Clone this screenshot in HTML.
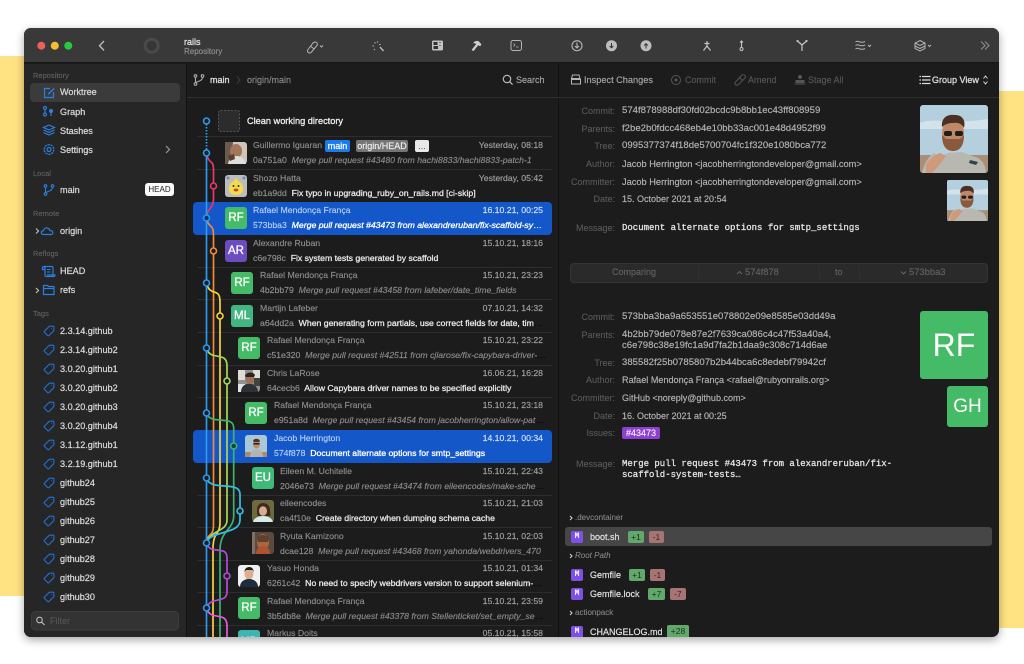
<!DOCTYPE html>
<html><head><meta charset="utf-8"><style>
*{box-sizing:border-box}
html,body{margin:0;padding:0;width:1024px;height:664px;overflow:hidden;background:#fff;font-family:"Liberation Sans",sans-serif}
body{filter:blur(.25px)}
#win{position:absolute;left:24px;top:28px;width:975px;height:609px;border-radius:7px;overflow:hidden;background:#1c1c1c;box-shadow:0 3px 9px rgba(0,0,0,.35)}
.t{position:absolute;white-space:nowrap;line-height:12px;font-size:9px;-webkit-text-stroke:.15px}
.s{position:absolute;left:33px;font-size:7.5px;line-height:10px;color:#5f5f5f;-webkit-text-stroke:.15px}
.i{position:absolute;left:60px;font-size:9.1px;line-height:12px;color:#d6d6d6;-webkit-text-stroke:.25px;white-space:nowrap}
.n{color:#8c8c8c}.d{color:#a0a0a0;position:absolute;right:481px;text-align:right;white-space:nowrap;font-size:8.7px;line-height:12px;-webkit-text-stroke:.15px}
.h{color:#8f8f8f}.b{color:#e8e8e8;-webkit-text-stroke:.28px}.m{color:#8a8a8a;font-style:italic}
.row{position:absolute;font-size:8.7px;line-height:12px;white-space:nowrap;overflow:hidden;text-overflow:ellipsis;width:293px;-webkit-text-stroke:.15px}
.sep{position:absolute;left:197px;width:355px;height:1px;background:#2d2d2d}
.sel{position:absolute;left:193px;width:359px;height:33px;background:#1357c9;border-radius:4px}
.av{position:absolute;width:22px;height:22px;border-radius:3px;color:#fff;font-size:11.5px;line-height:22px;text-align:center;-webkit-text-stroke:.3px;overflow:hidden}
.g{background:#46bb67}.l{position:absolute;right:409px;font-size:9px;line-height:12px;color:#5a5a5a;-webkit-text-stroke:.1px;text-align:right;white-space:nowrap}
.v{position:absolute;left:622px;font-size:9px;line-height:12px;color:#b4b4b4;white-space:nowrap;-webkit-text-stroke:.15px}
.x{font-size:9.6px}.y{font-size:9.25px}
.mono{font-family:"Liberation Mono",monospace;font-size:9px;color:#e2e2e2;-webkit-text-stroke:.3px}
.f{position:absolute;left:590px;font-size:9px;line-height:12px;color:#e0e0e0;-webkit-text-stroke:.2px;white-space:nowrap}
.mk{position:absolute;left:571px;width:12px;height:12px;border-radius:2px;background:#7d50e8;color:#fff;font:bold 8px/12px "Liberation Mono",monospace;text-align:center}
.p,.q{position:absolute;height:12px;border-radius:2px;font-size:8.5px;line-height:12px;text-align:center}
.p{background:#61a86a;color:#17301c}.q{background:#a77474;color:#3d2323}
.sec{position:absolute;left:575px;font-size:8px;line-height:10px;color:#858585;-webkit-text-stroke:.1px;white-space:nowrap}
svg{position:absolute;overflow:visible}
</style></head><body>
<div style="position:absolute;left:0;top:56px;width:30px;height:540px;background:#ffe383"></div>
<div style="position:absolute;left:990px;top:91px;width:34px;height:537px;background:#ffe383"></div>
<div id="win"></div>
<div style="position:absolute;left:24px;top:28px;width:975px;height:609px;border-radius:7px;overflow:hidden">
<div style="position:absolute;left:0;top:0;width:975px;height:35px;background:#393939;border-bottom:1px solid #151515"></div>
<div style="position:absolute;left:0;top:36px;width:163px;height:573px;background:#262626;border-right:1px solid #111"></div>
<div style="position:absolute;left:534px;top:36px;width:1px;height:573px;background:#111"></div>
</div>

<svg width="1024" height="664" style="left:0;top:0" fill="none">
<defs>
<symbol id="tag" viewBox="0 0 12 12" overflow="visible"><path d="M7 1.200h3c.5 0 .9.4.9.9v3c0 .4-.2.6-.4.9L6 10.500c-.4.4-1 .4-1.400 0L1.500 7.400c-.4-.4-.4-1 0-1.400L6 1.600c.3-.2.6-.4 1-.4z" stroke="#1f71d6" stroke-width="1.100" fill="none"/><circle cx="8.600" cy="3.400" r=".5" fill="#1f71d6"/></symbol>
<symbol id="br" viewBox="0 0 12 12" overflow="visible"><g stroke-width="1.100" fill="none"><circle cx="2.500" cy="2" r="1.300"/><circle cx="9.500" cy="2" r="1.300"/><circle cx="2.500" cy="10" r="1.300"/><path d="M2.500 3.300v5.400M9.500 3.300c0 3-3 3.500-5 4.500-1 .5-2 .7-2 1"/></g></symbol>
</defs>
<circle cx="41.300" cy="45.700" r="4" fill="#ee5f57"/><circle cx="54.800" cy="45.700" r="4" fill="#f5bd2f"/><circle cx="68.300" cy="45.700" r="4" fill="#29c840"/>
<path d="M104 41l-4.500 4.700 4.500 4.700" stroke="#bdbdbd" stroke-width="1.400"/>
<circle cx="151.700" cy="45.700" r="6.500" stroke="#4a4a4a" stroke-width="3" fill="#363636"/>
<g stroke="#b5b5b5" stroke-width="1" fill="none">
<path d="M308 49.500l5-6.500c1.500-1.800 3.500-.8 4 0s.5 2-.5 3l-5 6c-1.500 1.500-3 1-3.500.3s-1-1.500 0-2.800zM310.500 46l3.500 3"/>
<path d="M320 45.500l1.500 1.500 1.500-1.500"/>
<path d="M380 47l3.500 4" stroke-width="1.500"/><path d="M375 42v1.500M372.500 46h1.500M378 41.500l-1 1M374 50l1-1M379 44.500h1.500"/>
<rect x="432" y="40.500" width="11" height="10" rx="1.500" fill="#c2c2c2" stroke="none"/><rect x="433.500" y="42" width="4" height="3" fill="#333" stroke="none"/><rect x="433.500" y="46" width="4.500" height="3" fill="#333" stroke="none"/><path d="M440 42v1M440 45v1" stroke="#333"/>
<path d="M472.500 50.500l4.500-5.500" stroke="#cfcfcf" stroke-width="2.200"/><path d="M473.500 42.500c2-2 4-2 5.500-1l2.500 3-1.500 1.800-1.800-1-1.500.8-1-2.300c-.5-.6-1.300-.7-2.200-.3z" fill="#cfcfcf" stroke="none"/>
<rect x="511" y="40.500" width="10.500" height="10" rx="2"/><path d="M513.500 43.500l1.500 1.500-1.500 1.500M516 47h2.500" stroke-width=".8"/>
<circle cx="577" cy="45.700" r="5" stroke-width="1.100"/><path d="M577 42.500v5.500M575 46l2 2 2-2" stroke-width="1.100"/>
<circle cx="611.500" cy="45.700" r="5.500" fill="#bdbdbd" stroke="none"/><path d="M611.500 43v4.500M609.700 46l1.800 1.800 1.800-1.800" stroke="#333"/>
<circle cx="646" cy="45.700" r="5.500" fill="#bdbdbd" stroke="none"/><path d="M646 48.500V44M644.200 45.500l1.800-1.800 1.800 1.800" stroke="#333"/>
<path d="M707 41v5M707 46l-3.500 4.500M707 46l3.500 4.500M704.500 43.500h5" stroke="#c5c5c5" stroke-width="1.200"/>
<path d="M741.500 40.500v7M740 42.500l1.500-1.500 1.500 1.500" stroke="#c5c5c5" stroke-width="1.100"/><circle cx="741.500" cy="49" r="1.500" stroke="#c5c5c5"/>
<path d="M802 51v-6M802 45l-4-3.500M802 45l4-3.500" stroke="#c5c5c5" stroke-width="1.200"/><circle cx="797.500" cy="41" r="1.100" fill="#c5c5c5" stroke="none"/><circle cx="806.500" cy="41" r="1.100" fill="#c5c5c5" stroke="none"/>
<path d="M855.500 42c2-1.500 3-.5 4.500 0s3 .5 5-.5M855.500 45.500c2-1.500 3-.5 4.500 0s3 .5 5-.5M855.500 49c2-1.500 3-.5 4.500 0s3 .5 5-.5"/><path d="M868 45l1.500 1.500 1.500-1.500"/>
<path d="M920 40.500l5 2.500v5.500l-5 2.500-5-2.500V43zM915 43l5 2.500 5-2.500M915 46l5 2.500 5-2.500"/><path d="M928 45l1.500 1.500 1.500-1.500"/>
<path d="M981 41.500l4 4-4 4M985 41.500l4 4-4 4" stroke="#8f8f8f" stroke-width="1.100"/>
</g>
<rect x="30" y="83" width="150" height="19" rx="4" fill="#3b3b3b"/>
<g stroke="#2b7fe0" stroke-width="1.200" fill="none">
<path d="M50 88.500h-5.500v9h9V92"/><path d="M48 93.500l5.500-5.500 1 1-5.500 5.500h-1z" fill="#2b7fe0" stroke="none"/>
<circle cx="45" cy="108" r="1.500"/><path d="M45 109.500v3"/><circle cx="45" cy="114.500" r="1.500"/><circle cx="51" cy="111" r="1.500" fill="#2b7fe0"/><path d="M51 112v4"/>
<path d="M49 125l5.500 2.500-5.500 2.500-5.500-2.500zM43.500 130l5.500 2.500 5.500-2.500M43.500 132.500l5.500 2.500 5.500-2.500"/>
<circle cx="49" cy="149.500" r="2"/><circle cx="49" cy="149.500" r="4.800" stroke-dasharray="2.200 .8" stroke-width="1.300"/>
<path d="M166 146l3.500 3.500-3.500 3.500" stroke="#999"/>
<path d="M36 228.500l2.500 2.500-2.500 2.500" stroke="#bbb"/>
<path d="M43.500 234.500c-2 0-2.500-1.500-2-2.800.5-1 1.500-1.200 2-1 .5-2 2-3 3.800-2.700 1.500.3 2.300 1.300 2.500 2.500 2-.2 3 1 3 2.200s-1 1.800-2 1.800z"/>
<path d="M36 288l2.500 2.500-2.500 2.500" stroke="#bbb"/>
<path d="M43.500 285.500h4l1 1h5.500v8h-10.500z"/><path d="M43.500 288.500h10.500"/>
<path d="M44 266.500h7.500c1 0 1.500.5 1.500 1.500v7.500M44 266.500c-1 0-1.500 .5-1.500 1.500v1.500H45M45 267v8c0 1 .5 1.500 1.500 1.500h7c1 0 1.500-.5 1.500-1.500h-8"/><path d="M47 269.500h3.500M47 272h3.500" stroke-width=".9"/>
</g>
<use href="#br" x="43" y="184" width="12" height="12" stroke="#2b7fe0"/>
<g><use href="#tag" x="43" y="325" width="12" height="12"/><use href="#tag" x="43" y="344" width="12" height="12"/><use href="#tag" x="43" y="363" width="12" height="12"/><use href="#tag" x="43" y="382" width="12" height="12"/><use href="#tag" x="43" y="401" width="12" height="12"/><use href="#tag" x="43" y="420" width="12" height="12"/><use href="#tag" x="43" y="439" width="12" height="12"/><use href="#tag" x="43" y="458" width="12" height="12"/><use href="#tag" x="43" y="477" width="12" height="12"/><use href="#tag" x="43" y="496" width="12" height="12"/><use href="#tag" x="43" y="515" width="12" height="12"/><use href="#tag" x="43" y="534" width="12" height="12"/><use href="#tag" x="43" y="553" width="12" height="12"/><use href="#tag" x="43" y="572" width="12" height="12"/><use href="#tag" x="43" y="591" width="12" height="12"/></g>
<line x1="187" y1="97.500" x2="999" y2="97.500" stroke="#2f2f2f"/>
<use href="#br" x="193" y="74" width="12" height="12" stroke="#aaa"/>
<path d="M237 76.500l3 3.500-3 3.500" stroke="#3d3d3d" fill="none"/>
<circle cx="507" cy="79" r="3.700" stroke="#bbb" stroke-width="1.200" fill="none"/><path d="M509.800 81.800l2.800 2.800" stroke="#bbb" stroke-width="1.300"/>
<path d="M572.500 75h6.500l1 3.500h-8.500zM571.500 79.500h9v4.500h-9z" stroke="#b5b5b5" fill="none"/>
<circle cx="676" cy="80" r="4.500" stroke="#565656" fill="none"/><circle cx="676" cy="80" r="1.500" fill="#565656"/>
<path d="M735.500 82l6-6.500c1.500-1.500 3-.5 3.500 0s.7 1.800-.5 3l-6 6c-1.500 1-2.500 .5-3 0s-1-1.500 0-2.500zM739 77l3 3" stroke="#565656" fill="none"/>
<circle cx="800" cy="77" r="2" fill="#565656"/><path d="M796 80.500h8v2h-8zM794.500 84h11" stroke="#565656" fill="#565656"/>
<path d="M919.500 76.500h1.500M922 76.500h8.500M919.500 80h1.500M922 80h8.500M919.500 83.500h1.500M922 83.500h8.500" stroke="#ddd" stroke-width="1.200"/>
<path d="M983.500 78.500l2-2.500 2 2.500M983.500 81.500l2 2.500 2-2.500" stroke="#ddd" fill="none"/>
<rect x="31.500" y="611.500" width="147" height="18.500" rx="4" fill="#333" stroke="#3d3d3d"/>
<circle cx="39.500" cy="620" r="2.800" stroke="#bbb" stroke-width="1.100" fill="none"/><path d="M41.500 622l3 3" stroke="#bbb" stroke-width="1.200"/>
</svg>

<div class="s" style="top:71px">Repository</div>
<div class="i" style="top:86px">Worktree</div><div class="i" style="top:105.500px">Graph</div><div class="i" style="top:124.500px">Stashes</div><div class="i" style="top:143.500px">Settings</div>
<div class="s" style="top:168.500px">Local</div><div class="i" style="top:184px">main</div>
<div style="position:absolute;left:145px;top:183px;width:29px;height:13px;border-radius:3px;background:#fafafa;color:#222;font-size:8px;line-height:13px;text-align:center">HEAD</div>
<div class="s" style="top:209px">Remote</div><div class="i" style="top:225px">origin</div>
<div class="s" style="top:249px">Reflogs</div><div class="i" style="top:265px">HEAD</div><div class="i" style="top:284px">refs</div>
<div class="s" style="top:309px">Tags</div>
<div class="i" style="top:325px">2.3.14.github</div><div class="i" style="top:344px">2.3.14.github2</div><div class="i" style="top:363px">3.0.20.github1</div><div class="i" style="top:382px">3.0.20.github2</div><div class="i" style="top:401px">3.0.20.github3</div><div class="i" style="top:420px">3.0.20.github4</div><div class="i" style="top:439px">3.1.12.github1</div><div class="i" style="top:458px">3.2.19.github1</div><div class="i" style="top:477px">github24</div><div class="i" style="top:496px">github25</div><div class="i" style="top:515px">github26</div><div class="i" style="top:534px">github27</div><div class="i" style="top:553px">github28</div><div class="i" style="top:572px">github29</div><div class="i" style="top:591px">github30</div>
<div class="t" style="left:50px;top:615px;color:#555">Filter</div>
<div class="t" style="left:184px;top:36px;color:#ddd;-webkit-text-stroke:.35px">rails</div>
<div class="t" style="left:184px;top:46px;color:#8f8f8f;font-size:8px">Repository</div>
<div class="t" style="left:210px;top:74px;color:#ddd;-webkit-text-stroke:.35px">main</div>
<div class="t" style="left:247px;top:74px;color:#8c8c8c">origin/main</div>
<div class="t" style="left:516px;top:73.500px;color:#a5a5a5">Search</div>
<div class="t" style="left:584px;top:73.500px;color:#a5a5a5;font-size:9.2px">Inspect Changes</div>
<div class="t" style="left:685px;top:74px;color:#565656">Commit</div>
<div class="t" style="left:748px;top:74px;color:#565656">Amend</div>
<div class="t" style="left:808px;top:74px;color:#565656">Stage All</div>
<div class="t" style="left:932px;top:74px;color:#ddd;-webkit-text-stroke:.3px">Group View</div>

<div class="sep" style="top:136px"></div><div class="sep" style="top:169px"></div><div class="sep" style="top:267px"></div><div class="sep" style="top:299px"></div><div class="sep" style="top:332px"></div><div class="sep" style="top:365px"></div><div class="sep" style="top:397px"></div><div class="sep" style="top:495px"></div><div class="sep" style="top:527px"></div><div class="sep" style="top:560px"></div><div class="sep" style="top:592px"></div><div class="sep" style="top:625px"></div>
<div class="sel" style="top:202px"></div><div class="sel" style="top:430px"></div>

<svg width="1024" height="664" style="left:0;top:0;clip-path:inset(0 0 27px 0)" fill="none" stroke-width="1.700">
<path d="M206.500 121V153" stroke="#2a9bf0" stroke-dasharray="1.500 1.500"/>
<path d="M206.500 153C209 166 213.500 158 213.500 170V198C213.500 210 207 207 206.500 218" stroke="#e8386a"/>
<path d="M206.500 218C209 230 213.500 222 213.500 236V525C213.500 538 207 532 206.500 543" stroke="#ef8b3d"/>
<path d="M206.500 283C210 298 220 286 220 302V522C220 536 213.500 530 213 548V640" stroke="#f7d43c"/>
<path d="M206.500 348C210 362 227 350 227 366V520C227 532 210 530 206.500 543" stroke="#a6d957"/>
<path d="M206.500 413C210 426 233.700 414 233.700 428V516C233.700 530 220 530 220 550V640" stroke="#3cb371"/>
<path d="M206.500 478C210 492 240 480 240 494V520C240 535 210 530 206.500 543" stroke="#35bfe6"/>
<path d="M206.500 543C210 556 227 544 227 558V592C227 604 210 596 206.500 608" stroke="#b44bd6"/>
<path d="M206.500 608C210 622 227 610 227 626V640" stroke="#e65bdc"/>
<path d="M206.500 153V640" stroke="#2a9bf0"/>
<g stroke="#2a9bf0" fill="#1c1c1c" stroke-width="1.600">
<circle cx="206.500" cy="121" r="3"/><circle cx="206.500" cy="153" r="3"/><circle cx="206.500" cy="283" r="3"/><circle cx="206.500" cy="348" r="3"/><circle cx="206.500" cy="413" r="3"/><circle cx="206.500" cy="478" r="3"/><circle cx="206.500" cy="543" r="3"/><circle cx="206.500" cy="608" r="3"/>
<circle cx="206.500" cy="218" r="3" fill="#0c2f6e"/>
<circle cx="213.500" cy="186" r="3" stroke="#e8386a"/>
<circle cx="213.500" cy="251" r="3" stroke="#ef8b3d"/>
<circle cx="220" cy="316" r="3" stroke="#f7d43c"/>
<circle cx="227" cy="381" r="3" stroke="#a6d957"/>
<circle cx="233.700" cy="446" r="3" stroke="#3cb371" fill="#123f3a"/>
<circle cx="240" cy="511" r="3" stroke="#35bfe6"/>
<circle cx="227" cy="576" r="3" stroke="#b44bd6"/>
</g>
<rect x="218.500" y="110.500" width="21" height="21" rx="2" fill="#2c2c2c" stroke="#555" stroke-width="1" stroke-dasharray="2 1.500"/>
</svg>
<div class="t" style="left:247px;top:115px;color:#eee;-webkit-text-stroke:.3px;font-size:9.2px">Clean working directory</div>

<svg width="22" height="22" viewBox="0 0 22 22" style="left:225px;top:142px"><rect width="22" height="22" rx="3" fill="#cfc5b8"/><path d="M0 0h8l-2 22H0z" fill="#6b5a4e"/><ellipse cx="11" cy="9" rx="6" ry="7" fill="#a3755a"/><path d="M3 22c1-6 5-8 9-8s8 3 9 8z" fill="#ddd"/><path d="M3 14l6-2 1 5-5 2z" fill="#5a3e30"/></svg>
<svg width="22" height="22" viewBox="0 0 22 22" style="left:225px;top:175px"><rect width="22" height="22" rx="3" fill="#bcbcbc"/><path d="M11 3l2 3c3 1 5 4 5 8 0 4-3 6-7 6s-7-2-7-6c0-4 2-7 5-8z" fill="#f3dc4a"/><circle cx="8.500" cy="11" r="1" fill="#333"/><circle cx="13.500" cy="11" r="1" fill="#333"/><ellipse cx="11" cy="15" rx="2.500" ry="1.500" fill="#c6473a"/><circle cx="3" cy="3" r="1.500" fill="#6b88b5"/><circle cx="19" cy="3" r="1.500" fill="#6b88b5"/></svg>
<div class="av g" style="left:225px;top:207px">RF</div>
<div class="av" style="left:225px;top:240px;background:#6b4cc1">AR</div>
<div class="av g" style="left:231px;top:272px">RF</div>
<div class="av" style="left:231px;top:305px;background:#41b680">ML</div>
<div class="av g" style="left:238px;top:337px">RF</div>
<svg width="22" height="22" viewBox="0 0 22 22" style="left:238px;top:370px"><rect width="22" height="22" rx="3" fill="#8f9290"/><path d="M0 0h7v10H0zM15 0h7v8h-7z" fill="#dfdcd5"/><path d="M0 14h7v8H0z" fill="#e4e4e4"/><ellipse cx="12" cy="9" rx="4.500" ry="5.500" fill="#9c7058"/><path d="M7 6c1-4 8-5 10-1l-1 2H8z" fill="#2b2420"/><path d="M9 14c-4 1-6 4-6 8h17c0-4-3-7-6-8z" fill="#2d3238"/><rect x="16" y="8" width="6" height="8" fill="#44423f"/></svg>
<div class="av g" style="left:245px;top:402px">RF</div>
<svg width="22" height="22" viewBox="0 0 22 22" style="left:245px;top:435px"><rect width="22" height="22" rx="3" fill="#a9c7d6"/><rect y="17" width="22" height="5" fill="#a98c6e"/><ellipse cx="11.500" cy="9" rx="3.500" ry="4.500" fill="#bf8a68"/><path d="M8 6c1-3 6-3 7 0l-1 1H9z" fill="#4a3225"/><rect x="8.500" y="8" width="6" height="1.500" fill="#222"/><path d="M5 22c0-5 3-8 6.500-8S18 17 18 22z" fill="#b5b4ae"/></svg>
<div class="av" style="left:252px;top:467px;background:#3fb978">EU</div>
<svg width="22" height="22" viewBox="0 0 22 22" style="left:252px;top:500px"><rect width="22" height="22" rx="3" fill="#6e6a3e"/><path d="M5 10c0-5 3-7 6-7s7 2 7 7c0 3 1 5 0 6H6c-1-1-1-3-1-6z" fill="#3f2a20"/><ellipse cx="11" cy="11" rx="4" ry="4.800" fill="#d9ad92"/><path d="M1 22c1-4 5-6 10-6s9 2 10 6z" fill="#d7ece8"/></svg>
<svg width="22" height="22" viewBox="0 0 22 22" style="left:252px;top:532px"><rect width="22" height="22" rx="3" fill="#5a4a40"/><ellipse cx="11" cy="10" rx="6" ry="8" fill="#a8683f"/><path d="M5 6c2-4 10-4 12 0l-1 4H6z" fill="#5e3f30"/><path d="M4 22c0-5 3-8 7-8s7 3 7 8z" fill="#b0532f"/><rect x="0" width="3" height="22" fill="#7d7066"/></svg>
<svg width="22" height="22" viewBox="0 0 22 22" style="left:238px;top:565px"><rect width="22" height="22" rx="3" fill="#f1f1f1"/><ellipse cx="11" cy="9" rx="4.500" ry="5.500" fill="#dcae8e"/><path d="M6.500 7c0-4 3-5 5-5s4.500 2 4 5l-1-2H8z" fill="#1f1d1c"/><path d="M2 22c0-5 4-8 9-8s9 3 9 8z" fill="#1f2c3d"/></svg>
<div class="av g" style="left:238px;top:597px">RF</div>
<div style="position:absolute;left:238px;top:630px;width:22px;height:7px;background:#3fb5b3;border-radius:3px 3px 0 0;overflow:hidden;color:#fff;font-size:11px;line-height:22px;text-align:center">MD</div>

<div class="row n" style="left:253px;top:139px;width:72px">Guillermo Iguaran</div>
<div style="position:absolute;left:325px;top:140px;width:25px;height:12px;border-radius:2px;background:#1a7bed;color:#fff;font-size:9px;line-height:12px;text-align:center;-webkit-text-stroke:.2px">main</div>
<div style="position:absolute;left:356px;top:140px;width:52px;height:12px;border-radius:2px;background:#757575;color:#eee;font-size:9px;line-height:12px;text-align:center;-webkit-text-stroke:.15px">origin/HEAD</div>
<div style="position:absolute;left:415px;top:140px;width:14px;height:12px;border-radius:2px;background:#e8e8e8;color:#555;font-size:9px;line-height:12px;text-align:center">...</div>
<div class="d" style="top:139px">Yesterday, 08:18</div>
<div class="row" style="left:253px;top:154px"><span class="h">0a751a0</span>&nbsp; <span class="m">Merge pull request #43480 from hachi8833/hachi8833-patch-1</span></div>

<div class="row n" style="left:253px;top:172px">Shozo Hatta</div><div class="d" style="top:172px">Yesterday, 05:42</div>
<div class="row" style="left:253px;top:187px"><span class="h">eb1a9dd</span>&nbsp; <span class="b">Fix typo in upgrading_ruby_on_rails.md [ci-skip]</span></div>

<div class="row" style="left:253px;top:204px;color:#b9cff2">Rafael Mendonça França</div><div class="d" style="top:204px;color:#d5e1f6">16.10.21, 00:25</div>
<div class="row" style="left:253px;top:219px;color:#fff"><span style="color:#b9cff2">573bba3</span>&nbsp; <i style="-webkit-text-stroke:.3px">Merge pull request #43473 from alexandreruban/fix-scaffold-system-tests</i></div>

<div class="row n" style="left:253px;top:237px">Alexandre Ruban</div><div class="d" style="top:237px">15.10.21, 18:16</div>
<div class="row" style="left:253px;top:252px"><span class="h">c6e798c</span>&nbsp; <span class="b">Fix system tests generated by scaffold</span></div>

<div class="row n" style="left:260px;top:269px">Rafael Mendonça França</div><div class="d" style="top:269px">15.10.21, 23:23</div>
<div class="row" style="left:260px;top:284px;width:286px"><span class="h">4b2bb79</span>&nbsp; <span class="m">Merge pull request #43458 from lafeber/date_time_fields</span></div>

<div class="row n" style="left:260px;top:302px">Martijn Lafeber</div><div class="d" style="top:302px">07.10.21, 14:32</div>
<div class="row" style="left:260px;top:317px;width:286px"><span class="h">a64dd2a</span>&nbsp; <span class="b">When generating form partials, use correct fields for date, time inputs</span></div>

<div class="row n" style="left:267px;top:334px">Rafael Mendonça França</div><div class="d" style="top:334px">15.10.21, 23:22</div>
<div class="row" style="left:267px;top:349px;width:279px"><span class="h">c51e320</span>&nbsp; <span class="m">Merge pull request #42511 from cjlarose/fix-capybara-driver-names</span></div>

<div class="row n" style="left:267px;top:367px">Chris LaRose</div><div class="d" style="top:367px">16.06.21, 16:28</div>
<div class="row" style="left:267px;top:382px;width:279px"><span class="h">64cecb6</span>&nbsp; <span class="b">Allow Capybara driver names to be specified explicitly</span></div>

<div class="row n" style="left:274px;top:399px">Rafael Mendonça França</div><div class="d" style="top:399px">15.10.21, 23:18</div>
<div class="row" style="left:274px;top:414px;width:272px"><span class="h">e951a8d</span>&nbsp; <span class="m">Merge pull request #43454 from jacobherrington/allow-patch-docs</span></div>

<div class="row" style="left:274px;top:432px;color:#b9cff2">Jacob Herrington</div><div class="d" style="top:432px;color:#d5e1f6">14.10.21, 00:34</div>
<div class="row" style="left:274px;top:447px;width:272px;color:#fff"><span style="color:#b9cff2">574f878</span>&nbsp; <span style="-webkit-text-stroke:.3px">Document alternate options for smtp_settings</span></div>

<div class="row n" style="left:280px;top:465px">Eileen M. Uchitelle</div><div class="d" style="top:465px">15.10.21, 22:43</div>
<div class="row" style="left:280px;top:480px;width:266px"><span class="h">2046e73</span>&nbsp; <span class="m">Merge pull request #43474 from eileencodes/make-schema-cache</span></div>

<div class="row n" style="left:280px;top:497px">eileencodes</div><div class="d" style="top:497px">15.10.21, 21:03</div>
<div class="row" style="left:280px;top:512px;width:266px"><span class="h">ca4f10e</span>&nbsp; <span class="b">Create directory when dumping schema cache</span></div>

<div class="row n" style="left:280px;top:530px">Ryuta Kamizono</div><div class="d" style="top:530px">15.10.21, 02:03</div>
<div class="row" style="left:280px;top:545px;width:266px"><span class="h">dcae128</span>&nbsp; <span class="m">Merge pull request #43468 from yahonda/webdrivers_470</span></div>

<div class="row n" style="left:267px;top:562px">Yasuo Honda</div><div class="d" style="top:562px">15.10.21, 01:34</div>
<div class="row" style="left:267px;top:577px;width:279px"><span class="h">6261c42</span>&nbsp; <span class="b">No need to specify webdrivers version to support selenium-webdriver</span></div>

<div class="row n" style="left:267px;top:595px">Rafael Mendonça França</div><div class="d" style="top:595px">15.10.21, 23:59</div>
<div class="row" style="left:267px;top:610px;width:279px"><span class="h">3b5db8e</span>&nbsp; <span class="m">Merge pull request #43378 from Stellenticket/set_empty_secret_key</span></div>

<div class="row n" style="left:267px;top:627px">Markus Doits</div><div class="d" style="top:627px">05.10.21, 15:58</div>

<div class="l" style="top:105px">Commit:</div><div class="v x" style="top:105px">574f878988df30fd02bcdc9b8bb1ec43ff808959</div>
<div class="l" style="top:123px">Parents:</div><div class="v x" style="top:123px">f2be2b0fdcc468eb4e10bb33ac001e48d4952f99</div>
<div class="l" style="top:140px">Tree:</div><div class="v x" style="top:140px">0995377374f18de5700704fc1f320e1080bca772</div>
<div class="l" style="top:158px">Author:</div><div class="v y" style="top:158px">Jacob Herrington &lt;jacobherringtondeveloper@gmail.com&gt;</div>
<div class="l" style="top:176px">Committer:</div><div class="v y" style="top:176px">Jacob Herrington &lt;jacobherringtondeveloper@gmail.com&gt;</div>
<div class="l" style="top:193px">Date:</div><div class="v" style="top:193px">15. October 2021 at 20:54</div>
<div class="l" style="top:222px">Message:</div><div class="v mono" style="top:222px">Document alternate options for smtp_settings</div>

<svg width="68" height="68" viewBox="0 0 68 68" style="left:920px;top:105px"><defs><clipPath id="cp"><rect width="68" height="68" rx="3"/></clipPath></defs><g clip-path="url(#cp)"><rect width="68" height="68" fill="#b4cfde"/><path d="M0 18c15-6 30 2 68-4v10H0z" fill="#d4e3ea"/><rect y="50" width="68" height="18" fill="#a88f75"/><path d="M2 68c2-10 8-18 12-20l6 4 8-4 14-1 16 6c5 3 8 9 8 15z" fill="#b8b7b0"/><path d="M6 60c2-5 8-10 14-12l6 3-6 8-8 9H6z" fill="#cf9a7a"/><ellipse cx="33" cy="28" rx="11" ry="15" fill="#bf8867"/><path d="M22 30c0 12 5 16 11 16s11-4 11-16l-4 4H26z" fill="#8a5a3d"/><path d="M22 22c-1-10 6-13 13-12 7 0 11 5 9 13-2-4-6-6-11-5-4 0-8 1-11 4z" fill="#4c3122"/><rect x="24" y="26" width="8" height="5" rx="2" fill="#1d1d1d"/><rect x="35" y="26" width="8" height="5" rx="2" fill="#1d1d1d"/><path d="M50 55l8 2-2 3-7-2z" fill="#33404a"/></g></svg>
<svg width="41" height="41" viewBox="0 0 68 68" style="left:947px;top:180px"><g clip-path="url(#cp)"><rect width="68" height="68" fill="#b4cfde"/><path d="M0 18c15-6 30 2 68-4v10H0z" fill="#d4e3ea"/><rect y="50" width="68" height="18" fill="#a88f75"/><path d="M2 68c2-10 8-18 12-20l6 4 8-4 14-1 16 6c5 3 8 9 8 15z" fill="#b8b7b0"/><path d="M6 60c2-5 8-10 14-12l6 3-6 8-8 9H6z" fill="#cf9a7a"/><ellipse cx="33" cy="28" rx="11" ry="15" fill="#bf8867"/><path d="M22 30c0 12 5 16 11 16s11-4 11-16l-4 4H26z" fill="#8a5a3d"/><path d="M22 22c-1-10 6-13 13-12 7 0 11 5 9 13-2-4-6-6-11-5-4 0-8 1-11 4z" fill="#4c3122"/><rect x="24" y="26" width="8" height="5" rx="2" fill="#1d1d1d"/><rect x="35" y="26" width="8" height="5" rx="2" fill="#1d1d1d"/></g></svg>

<div style="position:absolute;left:570px;top:263px;width:418px;height:20px;border-radius:4px;background:#2a2a2a;border:1px solid #353535"></div>
<div style="position:absolute;left:698px;top:266px;width:1px;height:14px;background:#303030"></div><div style="position:absolute;left:819px;top:266px;width:1px;height:14px;background:#303030"></div><div style="position:absolute;left:859px;top:266px;width:1px;height:14px;background:#303030"></div>
<div class="t" style="left:612px;top:266px;color:#626262">Comparing</div>
<svg width="8" height="5" style="left:736px;top:270px"><path d="M1 4l2.500-2.500L6 4" stroke="#666" fill="none"/></svg><div class="t" style="left:745px;top:266px;color:#626262;font-size:9.4px">574f878</div>
<div class="t" style="left:835px;top:266px;color:#626262">to</div>
<svg width="8" height="5" style="left:900px;top:270px"><path d="M1 1.500L3.500 4 6 1.500" stroke="#666" fill="none"/></svg><div class="t" style="left:909px;top:266px;color:#626262;font-size:9.4px">573bba3</div>

<div class="l" style="top:311px">Commit:</div><div class="v x" style="top:311px">573bba3ba9a653551e078802e09e8585e03dd49a</div>
<div class="l" style="top:329px">Parents:</div><div class="v x" style="top:329px">4b2bb79de078e87e2f7639ca086c4c47f53a40a4,</div><div class="v x" style="top:340px">c6e798c38e19fc1a9d7fa2b1daa9c308c714d6ae</div>
<div class="l" style="top:357px">Tree:</div><div class="v x" style="top:357px">385582f25b0785807b2b44bca6c8edebf79942cf</div>
<div class="l" style="top:374px">Author:</div><div class="v" style="top:374px;font-size:9.1px">Rafael Mendonça França &lt;rafael@rubyonrails.org&gt;</div>
<div class="l" style="top:392px">Committer:</div><div class="v" style="top:392px">GitHub &lt;noreply@github.com&gt;</div>
<div class="l" style="top:410px">Date:</div><div class="v" style="top:410px">16. October 2021 at 00:25</div>
<div class="l" style="top:427px">Issues:</div><div style="position:absolute;left:622px;top:427px;width:38px;height:12px;border-radius:2px;background:#8c3fd0;color:#f3e6fb;font-size:9px;line-height:12px;text-align:center;-webkit-text-stroke:.2px">#43473</div>
<div class="l" style="top:458px">Message:</div><div class="v mono" style="top:458px">Merge pull request #43473 from alexandreruban/fix-</div><div class="v mono" style="top:469px">scaffold-system-tests…</div>
<div style="position:absolute;left:920px;top:311px;width:68px;height:68px;border-radius:3px;background:#46bb67;color:#fff;font-size:32px;line-height:68px;text-align:center">RF</div>
<div style="position:absolute;left:947px;top:386px;width:41px;height:41px;border-radius:3px;background:#46bb67;color:#fff;font-size:19px;line-height:41px;text-align:center">GH</div>

<div style="position:absolute;left:565px;top:527px;width:427px;height:19px;border-radius:3px;background:#464646"></div>
<svg width="1024" height="664" style="left:0;top:0" fill="none" stroke="#ccc" stroke-width="1.100"><path d="M570 516l2 2-2 2M570 554l2 2-2 2M570 611l2 2-2 2"/></svg>
<div class="sec" style="top:513px">.devcontainer</div>
<div class="mk" style="top:531px">M</div><div class="f" style="top:531px">boot.sh</div><div class="p" style="left:628px;top:531px;width:16px">+1</div><div class="q" style="left:649px;top:531px;width:15px">-1</div>
<div class="sec" style="top:551px"><i>Root Path</i></div>
<div class="mk" style="top:569px">M</div><div class="f" style="top:569px">Gemfile</div><div class="p" style="left:629px;top:569px;width:16px">+1</div><div class="q" style="left:650px;top:569px;width:15px">-1</div>
<div class="mk" style="top:588px">M</div><div class="f" style="top:588px">Gemfile.lock</div><div class="p" style="left:648px;top:588px;width:17px">+7</div><div class="q" style="left:670px;top:588px;width:16px">-7</div>
<div class="sec" style="top:608px">actionpack</div>
<div class="mk" style="top:626px;height:11px;border-radius:2px 2px 0 0">M</div><div class="f" style="top:626px">CHANGELOG.md</div><div class="p" style="left:667px;top:625px;width:22px;height:12px;border-radius:2px 2px 0 0">+28</div>
</body></html>
